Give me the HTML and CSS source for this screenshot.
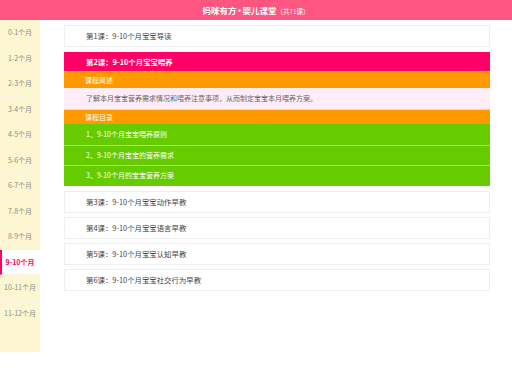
FILE: index.html
```html
<!DOCTYPE html>
<html>
<head>
    <meta charset="UTF-8">
    <title>妈咪有方</title>
    <link rel="stylesheet" href="styles.css">
</head>
<body>
    <div class="header">妈咪有方<span class="dot">•</span>婴儿课堂<span class="count">（共71课）</span></div>
    <div class="wrap">
        <ul class="months">
            <li>0-1个月</li>
            <li>1-2个月</li>
            <li>2-3个月</li>
            <li>3-4个月</li>
            <li>4-5个月</li>
            <li>5-6个月</li>
            <li>6-7个月</li>
            <li>7-8个月</li>
            <li>8-9个月</li>
            <li class="active">9-10个月</li>
            <li>10-11个月</li>
            <li>11-12个月</li>
        </ul>
        <div class="main">
            <div class="lesson">第1课：9-10个月宝宝导读</div>
            <div class="open">
                <div class="title">第2课：9-10个月宝宝喂养</div>
                <div class="label">课程简述</div>
                <div class="desc">了解本月宝宝营养需求情况和喂养注意事项，从而制定宝宝本月喂养方案。</div>
                <div class="label label2">课程目录</div>
                <ul class="chapters">
                    <li>1、9-10个月宝宝喂养原则</li>
                    <li>2、9-10个月宝宝的营养需求</li>
                    <li>3、9-10个月的宝宝营养方案</li>
                </ul>
            </div>
            <div class="lesson">第3课：9-10个月宝宝动作早教</div>
            <div class="lesson">第4课：9-10个月宝宝语言早教</div>
            <div class="lesson">第5课：9-10个月宝宝认知早教</div>
            <div class="lesson">第6课：9-10个月宝宝社交行为早教</div>
        </div>
    </div>
</body>
</html>
```

FILE: styles.css
```css
*{
    padding: 0;
    margin: 0;
}
body{
    font-family: "Noto Sans CJK SC", "Liberation Sans", sans-serif;
    font-size: 7px;
    color: #555;
    background: #fff;
}
ul{
    list-style: none;
}
.header{
    height: 20px;
    line-height: 20px;
    background: #fe5680;
    color: #fff;
    text-align: center;
    font-size: 8.5px;
    font-weight: bold;
}
.header .dot{
    display: inline-block;
    width: 6px;
    font-family: "Liberation Sans", sans-serif;
}
.header .count{
    font-size: 6.5px;
    font-weight: normal;
}
.wrap{
    display: flex;
    align-items: flex-start;
}
.months{
    width: 40px;
    height: 332px;
    background: #fdf7d1;
}
.months li{
    height: 24.5px;
    line-height: 24.5px;
    border-bottom: 1px solid #f7f1de;
    text-align: center;
    color: #8c8c8c;
}
.months .active{
    background: #fff;
    color: #ff0066;
    font-weight: bold;
    border-left: 2px solid #ff0066;
    padding-right: 2px;
}
.main{
    width: 426px;
    margin-left: 24px;
    padding-top: 5px;
}
.lesson{
    height: 20px;
    line-height: 20px;
    border: 1px solid #eeeeee;
    padding-left: 21px;
    margin-bottom: 4px;
    color: #444;
    font-size: 7.4px;
}
.open{
    margin: 5px 0;
    color: #fff;
}
.open .title{
    height: 19px;
    line-height: 19px;
    background: #ff0066;
    border-bottom: 1px solid #ff8fb8;
    padding-left: 22px;
    font-weight: bold;
    font-size: 7.4px;
}
.open .label{
    height: 16px;
    line-height: 16px;
    background: #ff9900;
    padding-left: 21px;
}
.open .label2{
    height: 14px;
    line-height: 14px;
    border-top: 1px solid #f9d1b0;
}
.open .desc{
    height: 21px;
    line-height: 21px;
    background: #feedf6;
    color: #666;
    padding-left: 22px;
}
.chapters li{
    height: 20.5px;
    line-height: 20.5px;
    background: #66cc00;
    padding-left: 22px;
}
.chapters li + li{
    height: 19.5px;
    line-height: 19.5px;
    border-top: 1px solid #a6e36a;
}
```
